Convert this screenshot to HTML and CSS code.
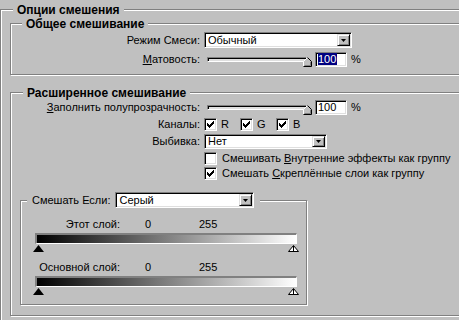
FILE: index.html
```html
<!DOCTYPE html>
<html lang="ru">
<head>
    <meta charset="UTF-8">
    <meta name="viewport" content="width=device-width, initial-scale=1.0">
    <title>Опции смешения</title>
    <link rel="stylesheet" href="styles.css">
</head>
<body>

<div class="group outer">
    <span class="group-title">Опции смешения</span>

    <div class="group general">
        <span class="group-title">Общее смешивание</span>
        <div class="row row-combo">
            <span class="label">Режим Смеси:</span>
            <div class="combo combo-mode">
                <span class="combo-text">Обычный</span>
                <span class="combo-btn"><svg width="5" height="3" viewBox="0 0 5 3"><polygon points="0,0 5,0 2.5,3" fill="#000"/></svg></span>
            </div>
        </div>
        <div class="row row-slider">
            <span class="label"><u>М</u>атовость:</span>
            <div class="slider">
                <div class="track"></div>
                <svg class="thumb" width="9" height="10" viewBox="0 0 9 10">
                    <polygon points="4.5,0.5 8.5,4.5 8.5,9.5 0.5,9.5 0.5,4.5" fill="#c0c0c0"/>
                    <polyline points="1.5,8.5 7.5,8.5 7.5,4.9" fill="none" stroke="#808080"/>
                    <polyline points="0.5,9 0.5,4.5 4.5,0.5" fill="none" stroke="#fff"/>
                    <polyline points="4.5,0.5 8.5,4.5 8.5,9.5 0.5,9.5" fill="none" stroke="#000"/>
                </svg>
            </div>
            <div class="field"><span class="sel">100</span></div>
            <span class="pct">%</span>
        </div>
    </div>

    <div class="group advanced">
        <span class="group-title">Расширенное смешивание</span>
        <div class="row row-slider">
            <span class="label"><u>З</u>аполнить полупрозрачность:</span>
            <div class="slider">
                <div class="track"></div>
                <svg class="thumb" width="9" height="10" viewBox="0 0 9 10">
                    <polygon points="4.5,0.5 8.5,4.5 8.5,9.5 0.5,9.5 0.5,4.5" fill="#c0c0c0"/>
                    <polyline points="1.5,8.5 7.5,8.5 7.5,4.9" fill="none" stroke="#808080"/>
                    <polyline points="0.5,9 0.5,4.5 4.5,0.5" fill="none" stroke="#fff"/>
                    <polyline points="4.5,0.5 8.5,4.5 8.5,9.5 0.5,9.5" fill="none" stroke="#000"/>
                </svg>
            </div>
            <div class="field"><span>100</span></div>
            <span class="pct">%</span>
        </div>
        <div class="row row-check">
            <span class="label">Каналы:</span>
            <div class="chan">
                <span class="check"><svg width="7" height="7" viewBox="0 0 7 7" shape-rendering="crispEdges"><path d="M0 2h1v3h-1zM1 3h1v3h-1zM2 4h1v3h-1zM3 3h1v3h-1zM4 2h1v3h-1zM5 1h1v3h-1zM6 0h1v3h-1z" fill="#000"/></svg></span>
                <span>R</span>
            </div>
            <div class="chan">
                <span class="check"><svg width="7" height="7" viewBox="0 0 7 7" shape-rendering="crispEdges"><path d="M0 2h1v3h-1zM1 3h1v3h-1zM2 4h1v3h-1zM3 3h1v3h-1zM4 2h1v3h-1zM5 1h1v3h-1zM6 0h1v3h-1z" fill="#000"/></svg></span>
                <span>G</span>
            </div>
            <div class="chan">
                <span class="check"><svg width="7" height="7" viewBox="0 0 7 7" shape-rendering="crispEdges"><path d="M0 2h1v3h-1zM1 3h1v3h-1zM2 4h1v3h-1zM3 3h1v3h-1zM4 2h1v3h-1zM5 1h1v3h-1zM6 0h1v3h-1z" fill="#000"/></svg></span>
                <span>B</span>
            </div>
        </div>
        <div class="row row-combo2">
            <span class="label">Выбивка:</span>
            <div class="combo combo-knock">
                <span class="combo-text">Нет</span>
                <span class="combo-btn"><svg width="5" height="3" viewBox="0 0 5 3"><polygon points="0,0 5,0 2.5,3" fill="#000"/></svg></span>
            </div>
        </div>
        <div class="row opt opt-first">
            <span class="check"></span>
            <span>Смешивать <u>В</u>нутренние эффекты как группу</span>
        </div>
        <div class="row opt opt-second">
            <span class="check"><svg width="7" height="7" viewBox="0 0 7 7" shape-rendering="crispEdges"><path d="M0 2h1v3h-1zM1 3h1v3h-1zM2 4h1v3h-1zM3 3h1v3h-1zM4 2h1v3h-1zM5 1h1v3h-1zM6 0h1v3h-1z" fill="#000"/></svg></span>
            <span>Смешать <u>С</u>креплённые слои как группу</span>
        </div>

        <div class="group blend-if">
            <div class="blend-title">
                <span>Смешать Если:</span>
                <div class="combo combo-gray">
                    <span class="combo-text">Серый</span>
                    <span class="combo-btn"><svg width="5" height="3" viewBox="0 0 5 3"><polygon points="0,0 5,0 2.5,3" fill="#000"/></svg></span>
                </div>
            </div>

            <div class="lvl lvl-first">
                <span class="lvl-name">Этот слой:</span>
                <span class="lvl-lo">0</span>
                <span>255</span>
            </div>
            <div class="ramp"></div>
            <div class="marks">
                <svg width="11" height="7" viewBox="0 0 11 7"><polygon points="5.5,0 11,7 0,7" fill="#000"/></svg>
                <svg width="11" height="7" viewBox="0 0 11 7"><polygon points="5.5,0.5 10.5,6.5 0.5,6.5" fill="#fff" stroke="#000"/><line x1="5.5" y1="1" x2="5.5" y2="6.5" stroke="#000"/></svg>
            </div>

            <div class="lvl lvl-second">
                <span class="lvl-name">Основной слой:</span>
                <span class="lvl-lo">0</span>
                <span>255</span>
            </div>
            <div class="ramp"></div>
            <div class="marks">
                <svg width="11" height="7" viewBox="0 0 11 7"><polygon points="5.5,0 11,7 0,7" fill="#000"/></svg>
                <svg width="11" height="7" viewBox="0 0 11 7"><polygon points="5.5,0.5 10.5,6.5 0.5,6.5" fill="#fff" stroke="#000"/><line x1="5.5" y1="1" x2="5.5" y2="6.5" stroke="#000"/></svg>
            </div>
        </div>
    </div>
</div>

</body>
</html>
```

FILE: styles.css
```css
body {
    margin: 0;
    background-color: #c0c0c0;
    font-family: "Liberation Sans", Arial, sans-serif;
    font-size: 11px;
    line-height: 13px;
    color: #000;
    overflow: hidden;
}
/* etched group box: grey line with a white one beside it */
.group {
    position: relative;
    border: 1px solid #808080;
    box-shadow: inset 1px 1px 0 #fff, 1px 1px 0 #fff;
}
.group-title {
    position: absolute;
    top: -7px;
    left: 11px;
    padding: 0 4px;
    background-color: #c0c0c0;
    font-size: 12px;
    line-height: 14px;
    font-weight: bold;
    white-space: nowrap;
}
/* the dialog goes on past the window edge, so the outer boxes stay open */
.outer {
    margin-top: 9px;
    width: 459px;
    height: 311px;
    box-sizing: border-box;
    border-right: 0;
    border-bottom: 0;
    padding: 13px 0 0 9px;
}
.outer > .group-title {
    left: 12px;
}
.general {
    width: 449px;
    box-sizing: border-box;
    border-right: 0;
    padding: 8px 0 7px;
}
.advanced {
    width: 449px;
    box-sizing: border-box;
    border-right: 0;
    margin-top: 17px;
    padding: 7px 0 10px;
}
.advanced > .group-title {
    left: 12px;
}
.row {
    display: flex;
    align-items: center;
}
.row-combo {
    height: 16px;
}
.row-slider {
    height: 15px;
}
.general .row-slider {
    margin-top: 4px;
}
.row-check {
    height: 13px;
    margin-top: 3px;
}
.row-combo2 {
    height: 15px;
    margin-top: 3px;
}
.opt {
    height: 13px;
    gap: 5px;
    margin-left: 193px;
    white-space: nowrap;
}
.opt-first {
    margin-top: 3px;
}
.opt-second {
    margin-top: 2px;
}
.label {
    width: 193px;
    box-sizing: border-box;
    padding-right: 4px;
    text-align: right;
    white-space: nowrap;
}
/* sunken controls */
.combo,
.field,
.check {
    box-sizing: border-box;
    border: 1px solid;
    border-color: #808080 #fff #fff #808080;
    box-shadow: inset 1px 1px 0 #000, inset -1px -1px 0 #dfdfdf;
    background-color: #fff;
}
.combo {
    display: flex;
    height: 16px;
    padding: 1px;
    line-height: 12px;
}
.combo-mode {
    width: 148px;
}
.combo-knock {
    width: 123px;
    height: 15px;
    line-height: 11px;
}
.combo-gray {
    width: 139px;
}
.combo-text {
    flex: 1;
    padding-left: 2px;
    white-space: nowrap;
}
.combo-btn {
    width: 13px;
    box-sizing: border-box;
    background-color: #c0c0c0;
    border: 1px solid;
    border-color: #dfdfdf #000 #000 #dfdfdf;
    box-shadow: inset 1px 1px 0 #fff, inset -1px -1px 0 #808080;
    display: flex;
    align-items: center;
    justify-content: center;
}
.combo-btn svg {
    display: block;
}
.slider {
    position: relative;
    width: 111px;
    height: 15px;
}
.track {
    margin: 5px 0 0 3px;
    width: 100px;
    height: 5px;
    box-sizing: border-box;
    border: 1px solid;
    border-color: #808080 #fff #fff #808080;
    box-shadow: inset 1px 1px 0 #000;
    background-color: #dfdfdf;
}
.thumb {
    position: absolute;
    left: 99px;
    top: 5px;
    display: block;
}
.field {
    width: 32px;
    height: 15px;
    padding: 1px 1px 1px 2px;
    line-height: 11px;
}
.sel {
    background-color: #000080;
    color: #fff;
    padding-right: 1px;
}
.pct {
    margin-left: 4px;
}
.check {
    width: 13px;
    height: 13px;
    display: flex;
    align-items: center;
    justify-content: center;
    flex: none;
}
.check svg {
    display: block;
}
.chan {
    display: flex;
    align-items: center;
    gap: 4px;
    width: 36px;
}
/* blend if */
.blend-if {
    width: 287px;
    height: 105px;
    box-sizing: border-box;
    margin: 20px 0 0 9px;
}
.blend-title {
    position: absolute;
    top: -9px;
    left: 6px;
    display: flex;
    align-items: center;
    gap: 5px;
    padding: 0 6px 0 5px;
    background-color: #c0c0c0;
    white-space: nowrap;
}
.lvl {
    display: flex;
}
.lvl-first {
    margin-top: 17px;
}
.lvl-second {
    margin-top: 9px;
}
.lvl-name {
    width: 99px;
    text-align: right;
}
.lvl-lo {
    margin-left: 25px;
    width: 54px;
}
.ramp {
    margin: 2px 0 0 14px;
    width: 262px;
    height: 11px;
    box-sizing: border-box;
    border-style: solid;
    border-width: 2px 1px 1px 2px;
    border-color: #808080 #fff #fff #808080;
    background: linear-gradient(to right, #000, #fff);
}
.marks {
    display: flex;
    justify-content: space-between;
    width: 266px;
    height: 7px;
    margin: 1px 0 0 12px;
}
.marks svg {
    display: block;
}
```
